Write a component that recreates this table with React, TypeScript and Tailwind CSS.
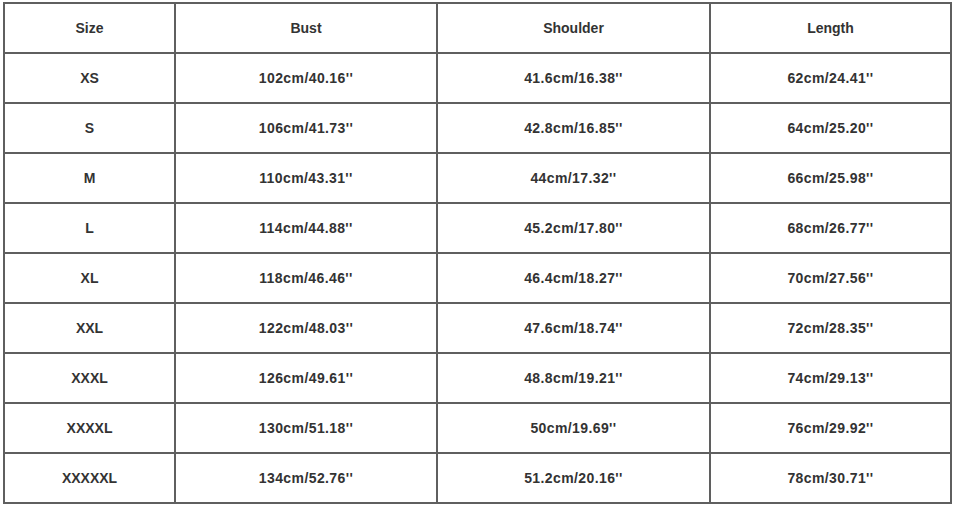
import React from "react";

const rows = [
  ["XS", "102cm/40.16''", "41.6cm/16.38''", "62cm/24.41''"],
  ["S", "106cm/41.73''", "42.8cm/16.85''", "64cm/25.20''"],
  ["M", "110cm/43.31''", "44cm/17.32''", "66cm/25.98''"],
  ["L", "114cm/44.88''", "45.2cm/17.80''", "68cm/26.77''"],
  ["XL", "118cm/46.46''", "46.4cm/18.27''", "70cm/27.56''"],
  ["XXL", "122cm/48.03''", "47.6cm/18.74''", "72cm/28.35''"],
  ["XXXL", "126cm/49.61''", "48.8cm/19.21''", "74cm/29.13''"],
  ["XXXXL", "130cm/51.18''", "50cm/19.69''", "76cm/29.92''"],
  ["XXXXXL", "134cm/52.76''", "51.2cm/20.16''", "78cm/30.71''"],
];

const App = () => {
  return (
    <div className="w-[954px] h-[506px] bg-white pt-[2px] pl-[3px] font-['Liberation_Sans',Arial,sans-serif]">
      <div className="grid grid-cols-[169px_260px_271px_239px] auto-rows-[48px] gap-[2px] p-[2px] bg-[#5f5f5f] w-fit">
        {["Size", "Bust", "Shoulder", "Length"].map((h) => (
          <div key={h} className="bg-white flex items-center justify-center text-[14px] font-bold text-[#333]">
            {h}
          </div>
        ))}
        {rows.map((r) =>
          r.map((c, i) => (
            <div
              key={r[0] + i}
              className={
                "bg-white flex items-center justify-center text-[14px] font-bold text-[#333] " +
                (i === 0 ? "" : "tracking-[0.4px]")
              }
            >
              {c}
            </div>
          ))
        )}
      </div>
    </div>
  );
};

export default App;
